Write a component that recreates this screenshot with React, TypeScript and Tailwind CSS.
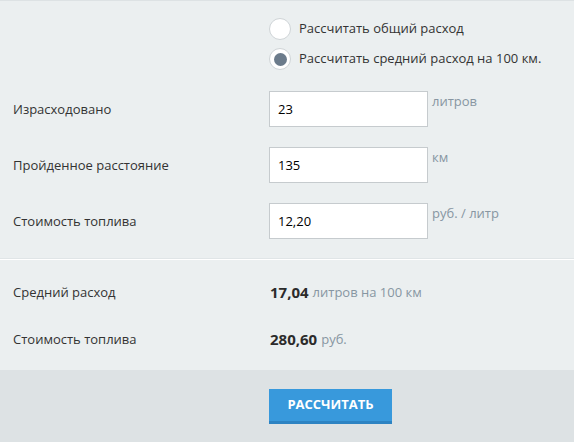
import type { ReactNode } from 'react';

type FieldRowProps = {
  label: string;
  value: string;
  unit: string;
};

function FieldRow({ label, value, unit }: FieldRowProps) {
  return (
    <div className="flex h-[56px] items-start">
      <label className="w-[269px] pl-[13px] text-[13px] leading-[36px] text-[#333]">{label}</label>
      <input
        defaultValue={value}
        className="h-[36px] w-[159px] border border-[#c6cbce] bg-white px-[8px] text-[13px] text-black outline-none"
      />
      <span className="ml-[4px] mt-[1px] text-[13px] leading-[18px] text-[#8796a2]">{unit}</span>
    </div>
  );
}

function Radio({ checked, children }: { checked?: boolean; children: ReactNode }) {
  return (
    <label className="flex h-[30px] items-center gap-[8px]">
      <span className="flex h-[22px] w-[22px] items-center justify-center rounded-full border border-[#cfd4d7] bg-white">
        {checked && <span className="h-[13px] w-[13px] rounded-full bg-[#6b7b8b]" />}
      </span>
      <span className="text-[13px] text-[#333]">{children}</span>
    </label>
  );
}

function ResultRow({ label, value, unit }: FieldRowProps) {
  return (
    <div className="flex h-[47px] items-center">
      <span className="w-[270px] pl-[13px] text-[13px] text-[#333]">{label}</span>
      <span className="text-[15px] font-bold text-[#2b2b2b]">{value}</span>
      <span className="ml-[4px] text-[13px] text-[#8796a2]">{unit}</span>
    </div>
  );
}

export default function App() {
  return (
    <div
      className="flex h-[442px] w-[574px] flex-col border-t border-[#dde2e4] bg-[#ebeff0]"
      style={{ fontFamily: '"Open Sans", "Noto Sans", sans-serif' }}
    >
      <div className="pl-[269px] pt-[13px]">
        <Radio>Рассчитать общий расход</Radio>
        <Radio checked>Рассчитать средний расход на 100 км.</Radio>
      </div>

      <div className="mt-[17px]">
        <FieldRow label="Израсходовано" value="23" unit="литров" />
        <FieldRow label="Пройденное расстояние" value="135" unit="км" />
        <FieldRow label="Стоимость топлива" value="12,20" unit="руб. / литр" />
      </div>

      <div className="mt-[-1px] border-b border-b-white border-t border-t-[#e0e5e7]" />

      <div className="pt-[9px]">
        <ResultRow label="Средний расход" value="17,04" unit="литров на 100 км" />
        <ResultRow label="Стоимость топлива" value="280,60" unit="руб." />
      </div>

      <div className="mt-auto flex h-[72px] items-start bg-[#dde2e4] pl-[269px] pt-[19px]">
        <button
          type="button"
          className="h-[35px] w-[123px] border-b-[3px] border-[#2d83c2] bg-[#3899dc] text-[13px] font-bold text-white"
        >
          РАССЧИТАТЬ
        </button>
      </div>
    </div>
  );
}
